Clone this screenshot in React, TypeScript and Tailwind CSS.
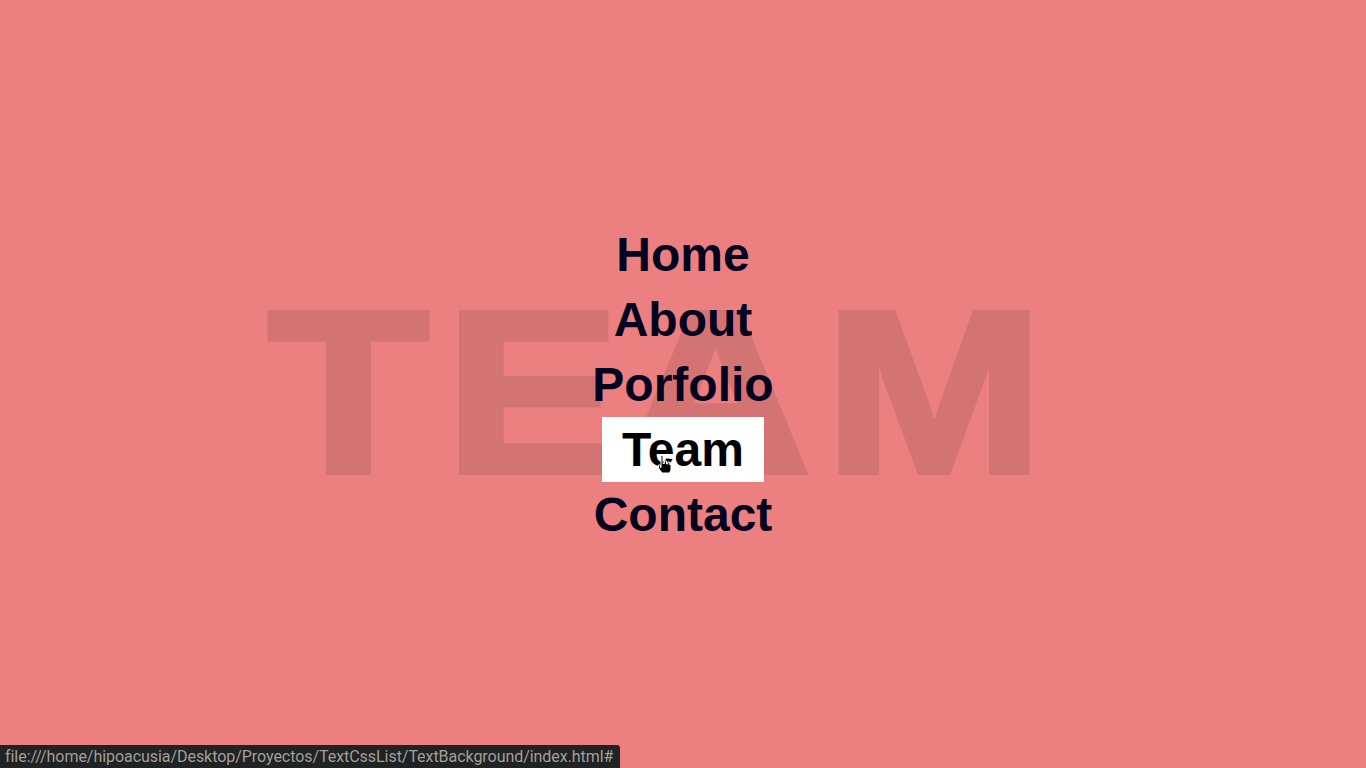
import React from 'react'

const items = ['Home', 'About', 'Porfolio', 'Team', 'Contact']

export default function App() {
  const active = 'Team'
  return (
    <div className="relative w-full h-screen overflow-hidden bg-[#ec8080] flex items-center justify-center">
      {/* big background word */}
      <div
        className="absolute left-[268px] top-[277px] origin-left scale-x-[1.14] whitespace-nowrap pointer-events-none select-none text-[#d47373] font-bold text-[231px] leading-none [-webkit-text-stroke:6px_#d47373]"
        style={{ fontFamily: '"Liberation Sans", Arial, sans-serif' }}
      >
        <span>T</span>
        <span className="ml-[14px]">E</span>
        <span>A</span>
        <span className="ml-[12px]">M</span>
      </div>

      <ul className="relative z-10 flex flex-col items-center" style={{ fontFamily: '"Liberation Sans", Arial, sans-serif' }}>
        {items.map((item) => (
          <li key={item}>
            <a
              href="#"
              className={
                item === active
                  ? 'block px-[20px] text-[48px] font-bold leading-[65px] bg-white text-black'
                  : 'block px-[20px] text-[48px] font-bold leading-[65px] text-[#03021f]'
              }
            >
              {item}
            </a>
          </li>
        ))}
      </ul>

      {/* mouse pointer */}
      <svg className="absolute left-[657px] top-[454px] z-20" width="16" height="20" viewBox="0 0 16 20">
        <path
          d="M4 1.5h2v8h1.5V7h2v3h1.2V8h2v2.5h1.3v5.5l-1.5 3H5l-3.5-5V11h2v2.5H4z"
          fill="#000"
          stroke="#fff"
          strokeWidth="1"
        />
      </svg>

      {/* status bar */}
      <div
        className="absolute left-0 bottom-0 z-20 h-[23px] pl-[5px] pr-[7px] bg-[#202324] rounded-tr-[3px] text-[16px] leading-[23px] tracking-[-0.05px] text-[#a59e97]"
        style={{ fontFamily: 'Roboto, sans-serif' }}
      >
        file:///home/hipoacusia/Desktop/Proyectos/TextCssList/TextBackground/index.html#
      </div>
    </div>
  )
}
